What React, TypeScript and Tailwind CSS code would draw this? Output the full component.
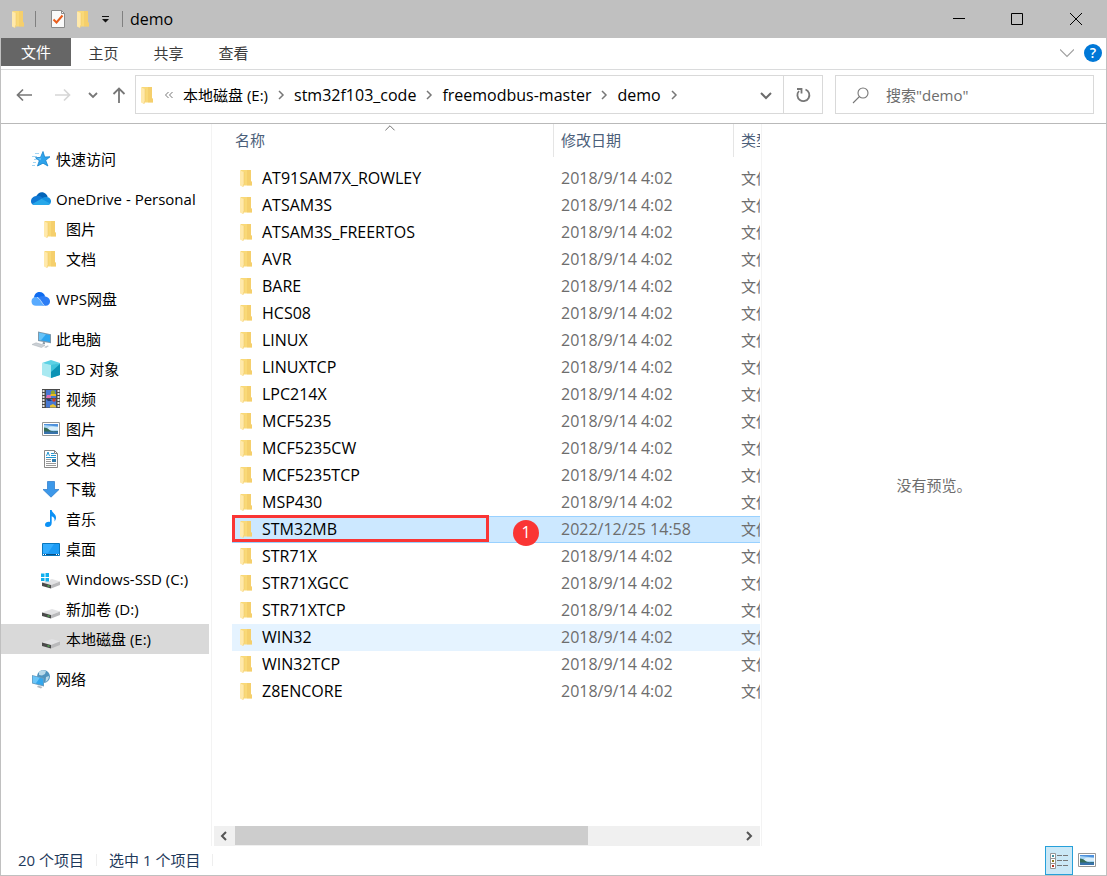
import { useState } from "react";
import type { ReactNode } from "react";

type IconProps = { className?: string };

function Svg({ className = "size-5", children }: { className?: string; children: ReactNode }) {
  return (
    <svg viewBox="0 0 20 20" className={`shrink-0 ${className}`} fill="none" aria-hidden="true">
      {children}
    </svg>
  );
}

function FolderIcon({ className = "size-5" }: IconProps) {
  return (
    <Svg className={className}>
      <path d="M3.500 2H14v11l1 1v3.500H4z" fill="#f9d978" />
      <path d="M10 2h4v11l1 1v3.500h-5z" fill="#f1c65f" opacity=".5" />
      <path d="M3 2.500 7 4v11.500L6 19l-3-1.500z" fill="#ffe9ab" />
      <path d="M7 4v11.500L6 19" stroke="#eec766" strokeWidth=".5" />
    </Svg>
  );
}

function StarIcon() {
  return (
    <Svg>
      <path d="M4 4.500h4M1 7.500h5M3 10.500h3M2 13.500h3M1 16.500h3" stroke="#8ccaf0" strokeWidth=".8" />
      <path
        d="M12 2.500 13.700 8l5.300-.2-4.300 3.500 2.200 5.700-4.900-2.800L6.500 17l1.800-5.300-3.800-3 5-.3z"
        fill="#2ea3ec"
        stroke="#1583cc"
        strokeWidth=".8"
      />
      <path d="M12 4 10.500 9l-4.500.2 3.500 2z" fill="#6cc7fa" />
    </Svg>
  );
}

function OneDriveIcon() {
  return (
    <Svg>
      <path d="M5 8C6.500 4 10 2.500 13 3.800c2 .8 3.200 2.300 3.700 4.200L12 12z" fill="#0364b8" />
      <path d="M0 12.500C0 9 2.500 7.500 5 7c2-.6 4 0 5.500 1L15 11 4 16C1.500 16 0 14.500 0 12.500z" fill="#0f78d4" />
      <path d="M10.500 9.500 13 8.200c3-.9 7 .3 7 4 0 2-1.200 3.800-3.500 3.800H12z" fill="#1490df" />
      <path d="M1.200 15 10.500 9.800 19 14.600c-.6.900-1.500 1.400-2.700 1.400H4c-1.200 0-2.200-.4-2.800-1z" fill="#28a8ea" />
    </Svg>
  );
}

function WpsCloudIcon() {
  return (
    <Svg>
      <path d="M3 8.500C3.500 4.500 6 3 8.500 3c3 0 4.800 1.700 5.600 4.200L9 11z" fill="#0f6cf0" />
      <path d="M6 9c4-3 13-2.500 13 3.500 0 2.500-1.700 4.300-4.300 4.300H12z" fill="#2c7df5" />
      <path d="M.500 12.500C.500 9 3 7.500 5.500 8c3 .5 5 5.500 7.500 8.800H5c-2.700 0-4.500-1.600-4.500-4.300z" fill="#59abff" />
      <path d="M6 8.200c3 1 4.500 5.500 7.300 8.500" stroke="#d5eaff" strokeWidth=".8" />
    </Svg>
  );
}

function ComputerIcon() {
  return (
    <Svg>
      <path d="m7 2.500 13 2.700v9L7 12z" fill="#7e98ab" />
      <path d="m8 3.700 11 2.300v7L8 11z" fill="#2da5f0" />
      <path d="m8 3.700 7 1.500L10 11.300 8 11z" fill="#67c3f8" />
      <path d="m12 13 2 .3v2l-2.500-.3z" fill="#8c9dab" />
      <path d="m1 15.500 4-1.700 9 2.500-3.500 2.200z" fill="#cbd0d5" stroke="#a9b0b6" strokeWidth=".5" />
      <path d="m13 18 3.500-1.500 1.500.5-3 2z" fill="#bdc4ca" />
    </Svg>
  );
}

function CubeIcon() {
  return (
    <Svg>
      <path d="m1 4 9-3 9 3-9 3z" fill="#5bd1e4" />
      <path d="m1 4 9 2v13l-9-3z" fill="#a8e9f1" />
      <path d="m10 6 9-2v12l-9 3z" fill="#3fc3da" />
      <path d="m10 13 9-8v11l-9 3z" fill="#0b93b5" />
    </Svg>
  );
}

function VideoIcon() {
  return (
    <Svg>
      <path d="M1 0h18v19H1z" fill="#4a4a4a" />
      <path d="M2.500 1v18M17.500 1v18" stroke="#e5e5e5" strokeWidth="2" strokeDasharray="2 1" />
      <path d="M5 1h10v8H5zM5 10h10v8.500H5z" fill="#4778d2" />
      <path d="M6 6h4v3H5z" fill="#e26db1" />
      <circle cx="12" cy="3.500" r="2.200" fill="#95a62b" />
      <path d="M9.500 5h5.500v2H9.500z" fill="#e9bb22" />
      <circle cx="13" cy="11" r="1.800" fill="#cc3b28" />
      <path d="M9 18.500v-2l3-1.500 3 2v1.500z" fill="#e9c232" />
      <path d="M5 10h4l2 2H7z" fill="#263b70" />
    </Svg>
  );
}

function PictureIcon({ className = "size-5" }: IconProps) {
  return (
    <Svg className={className}>
      <path d="M1.500 3.500h17v13h-17z" fill="#fff" stroke="#969696" />
      <path d="M3 5h14v10H3z" fill="#a8d5f5" />
      <path d="M3 5h14v2.500L3 6z" fill="#4e91dd" />
      <path d="M7 9c2-2 6-1 10-1v3H7z" fill="#d9eefa" />
      <path d="M3 8.500c4 0 5 3 8 3.500 2 .4 4-.3 6 0V14H3z" fill="#356b57" />
      <path d="M3 12.500h14V15H3z" fill="#3772ab" />
    </Svg>
  );
}

function DocumentIcon() {
  return (
    <Svg>
      <path d="M3.500 1.500h10l3 3v14h-13z" fill="#fff" stroke="#888" />
      <path d="M13.500 1.500v3h3" stroke="#888" />
      <path d="m5.500 7 1.500-4 1.500 4M10 4.500h3M10 6.500h5M5 8.500h10" stroke="#2596d1" />
      <path d="M5 10.500h5M5 12.500h5M5 14.500h10M5 16.500h10" stroke="#999" />
      <path d="M11 10h4v3h-4z" fill="#317cac" />
    </Svg>
  );
}

function DownloadIcon() {
  return (
    <Svg>
      <path d="M6.500 2.500h7v8h4.500l-8 7.700-8-7.700h4.500z" fill="#3c98e9" stroke="#2677c9" strokeWidth=".7" />
    </Svg>
  );
}

function MusicIcon() {
  return (
    <Svg>
      <path
        d="M9 1h1.700c.3 3 4.800 4 4.300 8-.1 1.400-.8 2.700-1.500 3.500.5-3.200-.6-4.500-2.800-5.200V14c0 2.500-1.800 4-4 4-1.700 0-2.700-1-2.700-2.300 0-2 2.500-3.300 5-2.700z"
        fill="#0c91f5"
      />
    </Svg>
  );
}

function DesktopIcon() {
  return (
    <Svg>
      <path d="M1.500 4.500h17v12h-17z" fill="#1b9bf5" stroke="#0877bd" />
      <path d="M2 5h11L7 14H2z" fill="#33adff" />
      <path d="M2 15.500h16" stroke="#0b4e82" />
      <path d="M2 15.500h1M4 15.500h1M15 15.500h1M17 15.500h1" stroke="#fff" />
    </Svg>
  );
}

function DriveIcon({ windows = false }: { windows?: boolean }) {
  return (
    <Svg>
      <path d="m1 13.500 10-3.500 8 2.500-9 3.500z" fill="#e2e2e4" />
      <path d="m10 16 9-3.500V16l-9 3.500z" fill="#b9b9bb" />
      <path d="m1 13.500 9 2.500v3.500L1 17z" fill="#4a4a4a" />
      <path d="m6.500 16.200 2 .6v1l-2-.6z" fill="#4fd34f" />
      {windows && (
        <>
          <path d="M0 3h9v9H0z" fill="#fff" />
          <path d="M0 4.500h3.500V8H0zM4.500 4H8v4H4.500zM0 9h3.500v3H0zM4.500 9H8v3.500H4.500z" fill="#10b0ee" />
        </>
      )}
    </Svg>
  );
}

function NetworkIcon() {
  return (
    <Svg>
      <circle cx="12.500" cy="7.500" r="6.500" fill="#4f93be" />
      <path d="M8 3c2-2 5-2.500 7-1l-1 3-3 1.500L8 6zM15 8l3-1c0 3-1.500 5-3.500 6z" fill="#b8d9ea" />
      <path d="m1 6 12 3v8.500L1 14.500z" fill="#6c9dbd" />
      <path d="m1.800 7 10.400 2.700v6.600L1.800 13.700z" fill="#32a7ee" />
      <path d="m1.800 7 7 1.800-4 5.700-3-.8z" fill="#6cc5f7" />
      <path d="M7 16.500 6 18l4 1.500 1.500-1.500z" fill="#b2bac1" />
    </Svg>
  );
}

function Chevron({ d, className, width = 1.5 }: { d: string; className: string; width?: number }) {
  return (
    <svg viewBox="0 0 12 12" className={`shrink-0 ${className}`} fill="none" stroke="currentColor" strokeWidth={width} aria-hidden="true">
      <path d={d} />
    </svg>
  );
}

const RIGHT = "M4 2l4 4-4 4";
const LEFT = "M8 2L4 6l4 4";
const DOWN = "M2 4l4 4 4-4";

type Place = { name: string; icon: ReactNode; children?: Place[] };

const places: Place[] = [
  { name: "快速访问", icon: <StarIcon /> },
  {
    name: "OneDrive - Personal",
    icon: <OneDriveIcon />,
    children: [
      { name: "图片", icon: <FolderIcon /> },
      { name: "文档", icon: <FolderIcon /> },
    ],
  },
  { name: "WPS网盘", icon: <WpsCloudIcon /> },
  {
    name: "此电脑",
    icon: <ComputerIcon />,
    children: [
      { name: "3D 对象", icon: <CubeIcon /> },
      { name: "视频", icon: <VideoIcon /> },
      { name: "图片", icon: <PictureIcon /> },
      { name: "文档", icon: <DocumentIcon /> },
      { name: "下载", icon: <DownloadIcon /> },
      { name: "音乐", icon: <MusicIcon /> },
      { name: "桌面", icon: <DesktopIcon /> },
      { name: "Windows-SSD (C:)", icon: <DriveIcon windows /> },
      { name: "新加卷 (D:)", icon: <DriveIcon /> },
      { name: "本地磁盘 (E:)", icon: <DriveIcon /> },
    ],
  },
  { name: "网络", icon: <NetworkIcon /> },
];

const folders = [
  "AT91SAM7X_ROWLEY",
  "ATSAM3S",
  "ATSAM3S_FREERTOS",
  "AVR",
  "BARE",
  "HCS08",
  "LINUX",
  "LINUXTCP",
  "LPC214X",
  "MCF5235",
  "MCF5235CW",
  "MCF5235TCP",
  "MSP430",
  "STM32MB",
  "STR71X",
  "STR71XGCC",
  "STR71XTCP",
  "WIN32",
  "WIN32TCP",
  "Z8ENCORE",
];

const drive = "本地磁盘 (E:)";
const crumbs = ["stm32f103_code", "freemodbus-master", "demo"];

function TitleBar() {
  return (
    <header className="flex h-[38px] items-center bg-[#c0c0c0] pr-px pl-[9px]">
      <FolderIcon />
      <span className="ml-[6px] h-4 w-px bg-[#808080]" />
      <button aria-label="属性" className="ml-3">
        <Svg>
          <path d="M3.500 1.500h10l3 3v14h-13z" fill="#fafafa" stroke="#8b8b8b" />
          <path d="M13.500 1.500v3h3" stroke="#8b8b8b" />
          <path d="m5.500 10.500 3 3 6-7" stroke="#e95d1c" strokeWidth="2" />
        </Svg>
      </button>
      <button aria-label="新建文件夹" className="ml-[6px]">
        <FolderIcon />
      </button>
      <button aria-label="自定义快速访问工具栏" className="ml-[6px]">
        <svg viewBox="0 0 12 12" className="size-3" aria-hidden="true">
          <path d="M2 3h7v1H2zM2 6h7L5.500 9.500z" fill="#111" />
        </svg>
      </button>
      <span className="ml-[10px] h-4 w-px bg-[#808080]" />
      <h1 className="ml-[7px] flex-1 text-base leading-5">demo</h1>
      <button aria-label="最小化" className="flex h-full w-[58px] items-center justify-center">
        <svg viewBox="0 0 12 12" className="size-3" stroke="#000" aria-hidden="true">
          <path d="M0 5.500h12" />
        </svg>
      </button>
      <button aria-label="最大化" className="flex h-full w-[58px] items-center justify-center">
        <svg viewBox="0 0 12 12" className="size-3" fill="none" stroke="#000" aria-hidden="true">
          <path d="M.5.5h11v11H.5z" />
        </svg>
      </button>
      <button aria-label="关闭" className="flex h-full w-[60px] items-center justify-center">
        <svg viewBox="0 0 12 12" className="size-3" fill="none" stroke="#000" aria-hidden="true">
          <path d="M0 0l12 12M12 0L0 12" />
        </svg>
      </button>
    </header>
  );
}

function RibbonTabs() {
  return (
    <div className="flex h-8 items-start border-b border-[#dadbdc]">
      <button className="h-7 w-[70px] bg-[#666666] text-white">文件</button>
      {["主页", "共享", "查看"].map((tab) => (
        <button key={tab} className="h-[30px] w-[65px] text-[#3b3b3b]">
          {tab}
        </button>
      ))}
      <div className="ml-auto flex h-[30px] items-center gap-[10px] pr-1">
        <button aria-label="展开功能区">
          <Chevron d="M0 3l6 6 6-6" className="size-[14px] text-[#a0a0a0]" width={1} />
        </button>
        <button aria-label="帮助" className="flex size-[18px] items-center justify-center rounded-full bg-[#0078d7] text-sm leading-none font-semibold text-white">
          ?
        </button>
      </div>
    </div>
  );
}

function AddressBar() {
  const [query, setQuery] = useState("");

  return (
    <div className="flex h-[54px] items-center border-b border-[#b9b9b9] pr-3 pb-1">
      <nav className="flex w-[134px] shrink-0 items-center pl-[15px] text-[#777]">
        <button aria-label="后退">
          <svg viewBox="0 0 16 16" className="size-4" fill="none" stroke="currentColor" strokeWidth="1.700" aria-hidden="true">
            <path d="M16 8H1.500M7 2.500 1.500 8 7 13.500" />
          </svg>
        </button>
        <button aria-label="前进" className="ml-[23px] text-[#d6d6d6]">
          <svg viewBox="0 0 16 16" className="size-4" fill="none" stroke="currentColor" strokeWidth="1.700" aria-hidden="true">
            <path d="M0 8h14.500M9 2.500 14.500 8 9 13.500" />
          </svg>
        </button>
        <button aria-label="最近浏览的位置" className="ml-4">
          <Chevron d={DOWN} className="size-3" width={1.8} />
        </button>
        <button aria-label="上移" className="ml-3">
          <svg viewBox="0 0 16 16" className="size-4" fill="none" stroke="currentColor" strokeWidth="1.800" aria-hidden="true">
            <path d="M8 16V1.500M2.500 7 8 1.500 13.500 7" />
          </svg>
        </button>
      </nav>

      <div className="flex h-[39px] min-w-0 flex-1 items-center border border-[#d9d9d9]">
        <FolderIcon className="ml-[2px] size-5" />
        <svg viewBox="0 0 12 12" className="ml-[5px] size-3 shrink-0" fill="none" stroke="#777" aria-hidden="true">
          <path d="M5.500 3l-3 3 3 3M9.500 3l-3 3 3 3" />
        </svg>
        <ol className="ml-2 flex min-w-0 flex-1 items-center">
          <li className="flex items-center whitespace-nowrap">
            <button>{drive}</button>
            <Chevron d={RIGHT} className="mx-[7px] size-3 text-[#777]" />
          </li>
          {crumbs.map((crumb) => (
            <li key={crumb} className="flex items-center text-base leading-5 whitespace-nowrap">
              <button>{crumb}</button>
              <Chevron d={RIGHT} className="mx-[7px] size-3 text-[#777]" />
            </li>
          ))}
        </ol>
        <button aria-label="以前的位置" className="flex h-full w-[35px] items-center justify-center text-[#6b6b6b]">
          <Chevron d="M1 4l5 5 5-5" className="size-3" width={2} />
        </button>
        <button aria-label="刷新" className="flex h-full w-[39px] items-center justify-center border-l border-[#d9d9d9]">
          <svg viewBox="0 0 16 16" className="size-4" fill="none" stroke="#777" strokeWidth="1.800" aria-hidden="true">
            <path d="M10.500 2.500A6 6 0 1 1 4 4M2 2h4.500v4.500" />
          </svg>
        </button>
      </div>

      <label className="ml-3 flex h-[39px] w-[259px] shrink-0 items-center border border-[#d9d9d9] pl-4">
        <svg viewBox="0 0 18 18" className="size-[18px] shrink-0" fill="none" stroke="#777" strokeWidth="1.100" aria-hidden="true">
          <circle cx="11" cy="7" r="5" />
          <path d="M7.500 10.500 1 17" />
        </svg>
        <input
          aria-label="搜索"
          value={query}
          onChange={(e) => setQuery(e.target.value)}
          placeholder={'搜索"demo"'}
          className="ml-4 min-w-0 flex-1 outline-none placeholder:text-[#6d6d6d]"
        />
      </label>
    </div>
  );
}

function Sidebar() {
  const [current, setCurrent] = useState(drive);

  return (
    <aside className="w-[211px] shrink-0 border-r border-[#f3f3f3] pt-5">
      <ul className="flex flex-col gap-[10px]">
        {places.map((place) => (
          <li key={place.name}>
            <button className="flex h-[30px] w-full items-center gap-[5px] pl-[30px] whitespace-nowrap">
              {place.icon}
              {place.name}
            </button>
            {place.children && (
              <ul>
                {place.children.map((child) => (
                  <li key={child.name} className="pr-[2px]">
                    <button
                      onClick={() => setCurrent(child.name)}
                      className={`flex h-[30px] w-full items-center gap-[5px] pl-10 whitespace-nowrap ${
                        child.name === current ? "bg-[#d9d9d9]" : ""
                      }`}
                    >
                      {child.icon}
                      {child.name}
                    </button>
                  </li>
                ))}
              </ul>
            )}
          </li>
        ))}
      </ul>
    </aside>
  );
}

function FileList() {
  const [selected, setSelected] = useState("STM32MB");

  const rowStyle = (name: string) => {
    if (name === selected) {
      return "bg-[#cce8ff] shadow-[inset_0_1px_0_#99d1ff,inset_0_-1px_0_#99d1ff]";
    }
    return name === "WIN32" ? "bg-[#e5f3ff]" : "";
  };

  return (
    <section className="flex min-w-0 flex-1 flex-col border-r border-[#f3f3f3] pr-px pl-[2px]">
      <div className="flex-1 overflow-hidden pl-[18px]">
        <table className="w-[652px] table-fixed text-left">
          <colgroup>
            <col className="w-[322px]" />
            <col className="w-[180px]" />
            <col className="w-[150px]" />
          </colgroup>
          <thead className="text-[#4c607a]">
            <tr>
              <th className="relative pb-2 font-normal">
                <div className="flex h-[33px] items-center border-r border-[#e5e5e5] pb-[2px] pl-[3px]">名称</div>
                <Chevron d="M1 8l5-5 5 5" className="absolute -top-px left-[49%] size-[11px] -translate-x-1/2 text-[#666]" width={1} />
              </th>
              <th className="pb-2 font-normal">
                <div className="flex h-[33px] items-center border-r border-[#e5e5e5] pb-[2px] pl-[7px]">修改日期</div>
              </th>
              <th className="pb-2 font-normal">
                <div className="flex h-[33px] items-center pb-[2px] pl-[7px]">类型</div>
              </th>
            </tr>
          </thead>
          <tbody>
            {folders.map((name) => (
              <tr key={name} onClick={() => setSelected(name)}>
                <td className={`relative p-0 ${rowStyle(name)}`}>
                  <div className="flex h-[27px] items-center gap-[5px] pb-[2px] pl-[5px] text-base leading-5">
                    <FolderIcon />
                    {name}
                  </div>
                  {name === "STM32MB" && (
                    <>
                      <span className="absolute -top-px left-0 h-[27px] w-[257px] border-3 border-[#fa3534]" />
                      <span className="absolute top-1 left-[281px] flex size-[26px] items-center justify-center rounded-full bg-[#fa3534] pb-[2px] text-base leading-5 text-white">
                        1
                      </span>
                    </>
                  )}
                </td>
                <td className={`p-0 pb-[2px] pl-[7px] text-base leading-5 text-[#6d6d6d] ${rowStyle(name)}`}>
                  {name === "STM32MB" ? "2022/12/25 14:58" : "2018/9/14 4:02"}
                </td>
                <td className={`p-0 pb-[2px] pl-[7px] text-[#6d6d6d] ${rowStyle(name)}`}>文件夹</td>
              </tr>
            ))}
          </tbody>
        </table>
      </div>
      <div className="flex h-5 bg-[#f0f0f0] text-[#555]">
        <button aria-label="向左滚动" className="flex w-[21px] items-center justify-center pr-[2px]">
          <Chevron d={LEFT} className="size-3" width={2} />
        </button>
        <div className="flex-1">
          <div className="h-[19px] w-[70%] bg-[#cdcdcd]" />
        </div>
        <button aria-label="向右滚动" className="flex w-[21px] items-center justify-center pr-[2px]">
          <Chevron d={RIGHT} className="size-3" width={2} />
        </button>
      </div>
    </section>
  );
}

function StatusBar() {
  return (
    <footer className="flex h-[29px] items-center pr-[9px] pl-[17px] text-[#1e395b]">
      <div className="flex items-center gap-3 pb-[2px]">
        <span>20 个项目</span>
        <span className="h-3 w-px bg-[#eeeeee]" />
        <span>选中 1 个项目</span>
        <span className="h-3 w-px bg-[#eeeeee]" />
      </div>
      <button aria-label="详细信息" className="ml-auto flex h-full w-7 items-center justify-center border border-[#26a0da] bg-[#cbe8f6]">
        <Svg>
          <path d="M1.500 2.500h5v15h-5zM1.500 7.500h5M1.500 12.500h5" fill="#fff" stroke="#969696" />
          <path d="M3 4h2v2H3z" fill="#3d8ea0" />
          <path d="M3 9h2v2H3z" fill="#8c7a1f" />
          <path d="M3 14h2v2H3z" fill="#b5301f" />
          <path d="M8 4.500h5M14 4.500h5M8 9.500h5M14 9.500h5M8 14.500h5M14 14.500h5" stroke="#777" />
        </Svg>
      </button>
      <button aria-label="大缩略图" className="ml-1 pb-[2px]">
        <PictureIcon />
      </button>
    </footer>
  );
}

export default function App() {
  return (
    <div className="flex min-h-screen flex-col bg-white font-['Open_Sans','Noto_Sans_CJK_SC',sans-serif] text-[15px] leading-5 text-black">
      <TitleBar />
      <div className="flex flex-1 flex-col border-x border-b border-[#c0c0c0]">
        <RibbonTabs />
        <AddressBar />
        <main className="flex flex-1">
          <Sidebar />
          <FileList />
          <section className="flex w-[344px] shrink-0 items-center justify-center text-[#6d6d6d]">没有预览。</section>
        </main>
        <StatusBar />
      </div>
    </div>
  );
}
